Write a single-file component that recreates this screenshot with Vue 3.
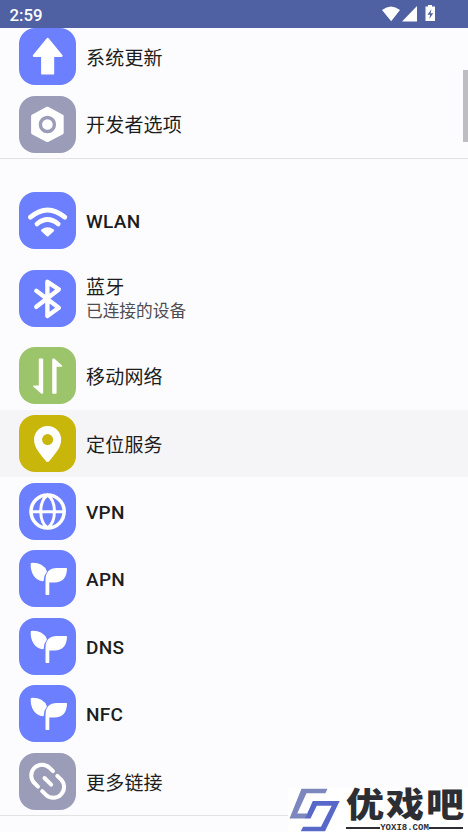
<script setup>
const system = [
  { label: '系统更新', icon: 'update', tone: 'blue' },
  { label: '开发者选项', icon: 'developer', tone: 'gray' },
]

const network = [
  { label: 'WLAN', icon: 'wifi', tone: 'blue', latin: true },
  { label: '蓝牙', note: '已连接的设备', icon: 'bluetooth', tone: 'blue' },
  { label: '移动网络', icon: 'mobile', tone: 'green' },
  { label: '定位服务', icon: 'location', tone: 'olive', active: true },
  { label: 'VPN', icon: 'globe', tone: 'blue', latin: true },
  { label: 'APN', icon: 'sprout', tone: 'blue', latin: true },
  { label: 'DNS', icon: 'sprout', tone: 'blue', latin: true },
  { label: 'NFC', icon: 'sprout', tone: 'blue', latin: true },
  { label: '更多链接', icon: 'link', tone: 'gray' },
]

const groups = [system, network]

// Artwork is drawn on a 57 x 57 grid, the size of one tile.
const art = {
  update: [
    { d: 'M28.7 11 15 27.8H23.3V45.4H34V27.8H42.4Z', fill: true, w: 2.4 },
  ],
  developer: [
    { d: 'M28.4 12.2 43.2 20V36.8L28.4 44.6 13.6 36.8V20Z', fill: true, w: 3 },
    { d: 'M35.4 28.5a7 7 0 1 1-14 0a7 7 0 1 1 14 0Z', w: 3.4, color: '#9a9cb8' },
  ],
  wifi: [
    { d: 'M11.4 25.2Q28.5 10.6 45.8 25.2', w: 4.8 },
    { d: 'M18 32Q28.5 23.2 39.2 32', w: 4.8 },
    { d: 'M23.2 38.4Q28.6 34.6 34 38.4L28.6 43.3Z', fill: true, w: 2.4 },
  ],
  bluetooth: [{ d: 'M17.3 20.8 39.8 37.8 28.4 46V11.8L39.8 19.4 17.3 36.8', w: 4.4 }],
  mobile: [
    { d: 'M20.6 12.2H23.4V46H22.6L15 39.2H20.6Z', fill: true, w: 1.6 },
    { d: 'M36.8 46H34V12.2H34.8L42.4 19H36.8Z', fill: true, w: 1.6 },
  ],
  location: [
    { d: 'M28.6 47Q27.6 47 26.5 45.4C21.5 39.5 15 32.7 15 24.5a13.6 13.6 0 0 1 27.2 0C42.2 32.7 35.7 39.5 30.7 45.4Q29.6 47 28.6 47Z', fill: true, w: 0 },
    { d: 'M34.1 24.6a5.5 5.5 0 1 1-11 0a5.5 5.5 0 1 1 11 0Z', fill: true, w: 0, color: '#c8b60a' },
  ],
  globe: [
    { d: 'M45.2 28.5a16.6 16.6 0 1 1-33.2 0a16.6 16.6 0 1 1 33.2 0Z', w: 3.5 },
    { d: 'M12 28.8H45.2', w: 3 },
    { d: 'M28.6 12C19.5 18.5 19.5 38.5 28.6 45M28.6 12C37.7 18.5 37.7 38.5 28.6 45', w: 3 },
  ],
  sprout: [
    { d: 'M12.4 13.6C20 13 25.5 16.5 27.2 21.5C25 24 24.2 27 24 30.5C16.5 29.8 12 23 12.4 13.6Z', fill: true, w: 1.4 },
    { d: 'M47.3 18.7C47 27.5 42.5 31.7 35.5 31.7H29.6V44.3H27.2V30C27.2 22.5 31.5 18.7 38 18.7Z', fill: true, w: 1.4 },
  ],
  link: [
    { d: 'M19 33.6 15.4 30A10.7 10.7 0 0 1 30.6 14.8L34 18.2', w: 4 },
    { d: 'M38.3 22.8 41.9 26.4A10.7 10.7 0 0 1 26.7 41.6L23.2 38.1', w: 4 },
    { d: 'M25.5 25 32.2 31.6', w: 4 },
  ],
}
</script>

<template>
  <main class="screen">
    <header class="status">
      <span class="clock">2:59</span>
      <svg class="signals" viewBox="0 0 60 20" aria-hidden="true">
        <path d="M1 5Q10 -2 19 5L10.2 16.2Z" />
        <path d="M36 1V16.5H21Z" />
        <path d="M47 0H51V1.5H54V16H44.5V1.5H47Z" />
        <path class="bolt" d="M50.5 4 46.5 9.7H49.2L48.3 14 52.2 8.3H49.5Z" />
      </svg>
    </header>

    <div class="content">
      <section v-for="(group, g) in groups" :key="g" class="group">
        <div
          v-for="item in group"
          :key="item.label"
          class="row"
          :class="{ tall: item.note, active: item.active }"
        >
          <span class="tile" :class="item.tone">
            <svg viewBox="0 0 57 57" aria-hidden="true">
              <path
                v-for="(p, i) in art[item.icon]"
                :key="i"
                :d="p.d"
                :fill="p.fill ? p.color || '#fff' : 'none'"
                :stroke="p.color || '#fff'"
                :stroke-width="p.w"
                stroke-linecap="round"
                stroke-linejoin="round"
              />
            </svg>
          </span>
          <span class="text" :class="{ latin: item.latin }">
            <span class="label">{{ item.label }}</span>
            <span v-if="item.note" class="note">{{ item.note }}</span>
          </span>
        </div>
      </section>
    </div>

    <i class="thumb"></i>

    <aside class="brand">
      <svg class="mark" viewBox="0 0 54 44" aria-hidden="true">
        <path fill="#7c87bd" d="M13.5 .7H39.5L37.4 5.3H18.5L9.2 25.5H19.5L17.5 30.5H1.5Z" />
        <path fill="#5868c9" d="M24.8 13H51.7L37 43.3H12.7L15.2 38.7H33L43.7 17.7H28.8L22.5 30.5H17Z" />
      </svg>
      <div class="words">
        <strong>优戏吧</strong>
        <div class="site">YOXI8.COM</div>
      </div>
    </aside>
  </main>
</template>

<style>
body {
  margin: 0;
  overflow: hidden;
}
</style>

<style scoped>
.screen {
  position: relative;
  height: 832px;
  overflow: hidden;
  background: #fcfcfe;
  color: #1d1d20;
  font-family: Roboto, "Noto Sans CJK SC", sans-serif;
}

.status {
  position: relative;
  z-index: 1;
  display: flex;
  align-items: center;
  justify-content: space-between;
  box-sizing: border-box;
  height: 28px;
  padding: 2px 27px 0 9.5px;
  background: #4f60a3;
  color: #fff;
}

.clock {
  font-size: 16.8px;
  font-weight: 500;
}

.signals {
  width: 60px;
  height: 20px;
  margin-top: -1px;
  fill: #fff;
}

.signals .bolt {
  fill: #4f60a3;
}

.content {
  margin-top: -5.3px;
}

.group {
  border-bottom: 1px solid #e2e2e5;
}

.group + .group {
  padding-top: 28px;
}

.row {
  display: flex;
  align-items: center;
  gap: 10px;
  box-sizing: border-box;
  height: 67.6px;
  padding-left: 19px;
}

.row.tall {
  height: 87.6px;
}

.row.active {
  background: #f5f5f8;
}

.tile {
  width: 57px;
  height: 57px;
  border-radius: 16px;
}

.tile svg {
  display: block;
  width: 100%;
  height: 100%;
}

.blue {
  background: #6b7fff;
}

.gray {
  background: #9a9cb8;
}

.green {
  background: #9cc46b;
}

.olive {
  background: #c8b60a;
}

.text {
  display: flex;
  flex-direction: column;
  padding-top: 4.4px;
}

.text.latin {
  padding-top: 3px;
}

.label {
  font-size: 19px;
  font-weight: 400;
  line-height: 24px;
  letter-spacing: 0.2px;
}

.latin .label {
  font-weight: 500;
  letter-spacing: 0.3px;
}

.note {
  color: #4c4c52;
  font-size: 16.7px;
  line-height: 24px;
}

.thumb {
  position: absolute;
  top: 70px;
  right: 0;
  width: 5px;
  height: 72px;
  background: #bdbdc2;
}

.brand {
  position: absolute;
  right: 0;
  bottom: 0;
  display: flex;
  width: 180px;
  height: 44px;
  background: #fff;
}

.mark {
  flex: none;
  width: 54px;
  height: 44px;
}

.words {
  margin-left: 4px;
  color: #2d2e34;
}

.words strong {
  display: block;
  height: 34px;
  font-family: "Noto Sans CJK SC", sans-serif;
  font-size: 34px;
  font-weight: 900;
  line-height: 29px;
  letter-spacing: 1.7px;
  white-space: nowrap;
  transform: scaleX(1.12);
  transform-origin: left;
}

.site {
  display: flex;
  align-items: center;
  width: 117px;
  height: 10px;
  padding-top: 1px;
  font: bold 9px/9px "Liberation Mono", monospace;
}

.site::before,
.site::after {
  content: "";
  flex: 1;
  height: 2px;
  background: currentColor;
}
</style>
